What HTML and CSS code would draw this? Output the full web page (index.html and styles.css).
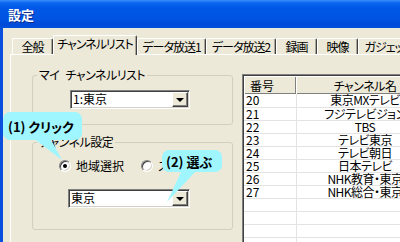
FILE: index.html
```html
<!DOCTYPE html>
<html lang="ja">

<head>
    <meta charset="UTF-8">
    <meta name="viewport" content="width=device-width, initial-scale=1.0">
    <title>設定</title>
    <link rel="stylesheet" href="styles.css">
</head>

<body>
    <div class="window">
        <div class="titlebar">設定</div>
        <div class="client">
            <div class="tabs">
                <div class="tab">全般</div>
                <div class="tab active">チャンネルリスト</div>
                <div class="tab">データ放送1</div>
                <div class="tab">データ放送2</div>
                <div class="tab">録画</div>
                <div class="tab">映像</div>
                <div class="tab">ガジェット</div>
            </div>
            <div class="panel">
                <div class="settings">
                    <fieldset class="group group-my">
                        <legend>マイ チャンネルリスト</legend>
                        <div class="combo">
                            <span class="combo-text">1:東京</span>
                            <span class="combo-btn"></span>
                        </div>
                    </fieldset>
                    <fieldset class="group group-ch">
                        <legend>チャンネル設定</legend>
                        <div class="radios">
                            <label class="radio"><span class="radio-dot checked"></span>地域選択</label>
                            <label class="radio"><span class="radio-dot"></span>スポット</label>
                        </div>
                        <div class="combo">
                            <span class="combo-text">東京</span>
                            <span class="combo-btn"></span>
                        </div>
                    </fieldset>
                </div>
                <div class="listview">
                    <table class="channels">
                        <thead>
                            <tr><th class="col-no">番号</th><th class="col-name">チャンネル名</th></tr>
                        </thead>
                        <tbody>
                            <tr><td>20</td><td class="name">東京MXテレビ</td></tr>
                            <tr><td>21</td><td class="name">フジテレビジョン</td></tr>
                            <tr><td>22</td><td class="name">TBS</td></tr>
                            <tr><td>23</td><td class="name">テレビ東京</td></tr>
                            <tr><td>24</td><td class="name">テレビ朝日</td></tr>
                            <tr><td>25</td><td class="name">日本テレビ</td></tr>
                            <tr><td>26</td><td class="name">NHK教育・東京</td></tr>
                            <tr><td>27</td><td class="name">NHK総合・東京</td></tr>
                            <tr><td></td><td></td></tr>
                            <tr><td></td><td></td></tr>
                            <tr><td></td><td></td></tr>
                            <tr><td></td><td></td></tr>
                        </tbody>
                    </table>
                </div>
            </div>
        </div>

        <div class="callout callout-click">(1) クリック</div>
        <div class="callout callout-pick">(2) 選ぶ</div>
    </div>
</body>

</html>
```

FILE: styles.css
```css
* {
    box-sizing: border-box;
}

html,
body {
    margin: 0;
    height: 100%;
    overflow: hidden;
}

body {
    font-family: "Noto Sans CJK JP", "Noto Sans", sans-serif;
    font-size: 12px;
    color: #000;
    background: #ece9d8;
    font-feature-settings: "palt";
}

.window {
    position: relative;
    display: flex;
    flex-direction: column;
    height: 242px;
}

.titlebar {
    height: 28px;
    padding-left: 8px;
    line-height: 29px;
    font-size: 13px;
    font-weight: bold;
    color: #fff;
    text-shadow: 1px 1px #0b2a8c;
    background: linear-gradient(#3a8ffa 0, #0a66ee 3px, #0058e8 8px, #0054e3 18px, #004ad6 25px, #0052e0 28px);
}

.client {
    flex: 1;
    border-left: 3px solid #0a50dc;
    padding: 7px 0 0 7px;
    overflow: hidden;
}

/* tab strip */
.tabs {
    display: grid;
    grid-template-columns: 41px 84px 69px 70px 41px 41px 60px;
    align-items: end;
    height: 19px;
    margin-left: 2px;
}

.tab {
    height: 16px;
    line-height: 15px;
    text-align: center;
    letter-spacing: -1px;
    white-space: nowrap;
    overflow: hidden;
    border-top: 1px solid #fff;
    border-left: 1px solid #fff;
    border-right: 1px solid #404040;
    border-radius: 2px 2px 0 0;
    box-shadow: inset -1px 0 #aca899;
}

.tab.active {
    position: relative;
    z-index: 1;
    height: 20px;
    margin-bottom: -1px;
    line-height: 15px;
    padding-bottom: 4px;
    background: #ece9d8;
}

.panel {
    display: flex;
    align-items: flex-start;
    gap: 9px;
    width: 600px;
    height: 200px;
    padding: 13px 0 0 21px;
    border-top: 1px solid #fff;
    border-left: 1px solid #fff;
}

/* group boxes */
.settings {
    width: 201px;
}

.group {
    margin: 0;
    min-width: 0;
    padding: 0;
    border: 1px solid #d0d0bf;
    border-radius: 3px;
}

.group legend {
    margin-left: 4px;
    padding: 0 2px;
    line-height: 14px;
    letter-spacing: -0.5px;
    word-spacing: 4px;
}

.group-my {
    height: 57px;
    padding-top: 8px;
}

.group-ch {
    margin-top: 10px;
    height: 95px;
    padding-top: 10px;
}

.combo {
    display: flex;
    width: 120px;
    height: 19px;
    margin-left: 37px;
    background: #fff;
    border: 1px solid;
    border-color: #808080 #fff #fff #808080;
    box-shadow: inset 1px 1px #404040, inset -1px -1px #d4d0c8;
}

.group-ch .combo {
    width: 122px;
    margin-left: 35px;
    margin-top: 16px;
}

.combo-text {
    flex: 1;
    padding-left: 2px;
    line-height: 16px;
}

.combo-btn {
    position: relative;
    width: 16px;
    margin: 1px 1px 1px 0;
    background: #ece9d8;
    border: 1px solid;
    border-color: #fff #404040 #404040 #fff;
    box-shadow: inset -1px -1px #808080;
}

.combo-btn::after {
    content: "";
    position: absolute;
    left: 3px;
    top: 5px;
    border-style: solid;
    border-width: 4px 4px 0 4px;
    border-color: #000 transparent transparent transparent;
}

/* radio buttons */
.radios {
    display: flex;
    gap: 17px;
    margin-left: 26px;
    height: 14px;
}

.radio {
    display: flex;
    align-items: center;
    gap: 5px;
    line-height: 14px;
}

.radio-dot {
    position: relative;
    width: 12px;
    height: 12px;
    border-radius: 50%;
    background: #fff;
    border: 1px solid;
    border-color: #808080 #fff #fff #808080;
    box-shadow: inset 1px 1px #404040, inset -1px -1px #d4d0c8;
}

.radio-dot.checked::after {
    content: "";
    position: absolute;
    left: 3px;
    top: 3px;
    width: 4px;
    height: 4px;
    border-radius: 50%;
    background: #000;
}

/* list view */
.listview {
    flex: 1;
    margin-top: 6px;
    height: 200px;
    background: #fff;
    border-top: 1px solid #808080;
    border-left: 1px solid #808080;
    box-shadow: inset 1px 1px #404040;
    padding: 1px 0 0 1px;
}

.channels {
    border-collapse: collapse;
    table-layout: fixed;
    width: 190px;
}

.channels th {
    height: 18px;
    padding: 0;
    font-weight: normal;
    background: #ece9d8;
    box-shadow: inset 1px 1px #fff, inset -1px -1px #808080;
    white-space: nowrap;
}

.channels .col-no {
    width: 52px;
    text-align: left;
    padding-left: 6px;
}

.channels .col-name {
    width: 138px;
    text-align: center;
    letter-spacing: -0.5px;
}

.channels td {
    height: 13px;
    padding: 0 0 0 2px;
    line-height: 12px;
    border-bottom: 1px solid #e3e3e3;
    border-right: 1px solid #e3e3e3;
    white-space: nowrap;
}

.channels td.name {
    text-align: center;
    padding: 0;
    letter-spacing: -0.5px;
}

/* callouts */
.callout {
    position: absolute;
    z-index: 5;
    background: #a0f6fe;
    border-radius: 7px;
    font-size: 13px;
    font-weight: bold;
    white-space: nowrap;
}

.callout::after {
    content: "";
    position: absolute;
    background: #a0f6fe;
}

.callout-click {
    left: 3px;
    top: 112px;
    width: 79px;
    height: 28px;
    padding: 5px 0 0 5px;
}

.callout-click::after {
    left: 30px;
    top: 26px;
    width: 30px;
    height: 22px;
    clip-path: polygon(0 0, 17px 0, 29px 22px);
}

.callout-pick {
    left: 162px;
    top: 150px;
    width: 60px;
    height: 22px;
    padding: 2px 0 0 4px;
}

.callout-pick::after {
    left: 5px;
    top: 20px;
    width: 30px;
    height: 32px;
    clip-path: polygon(15px 0, 30px 0, 0 32px);
}
```
